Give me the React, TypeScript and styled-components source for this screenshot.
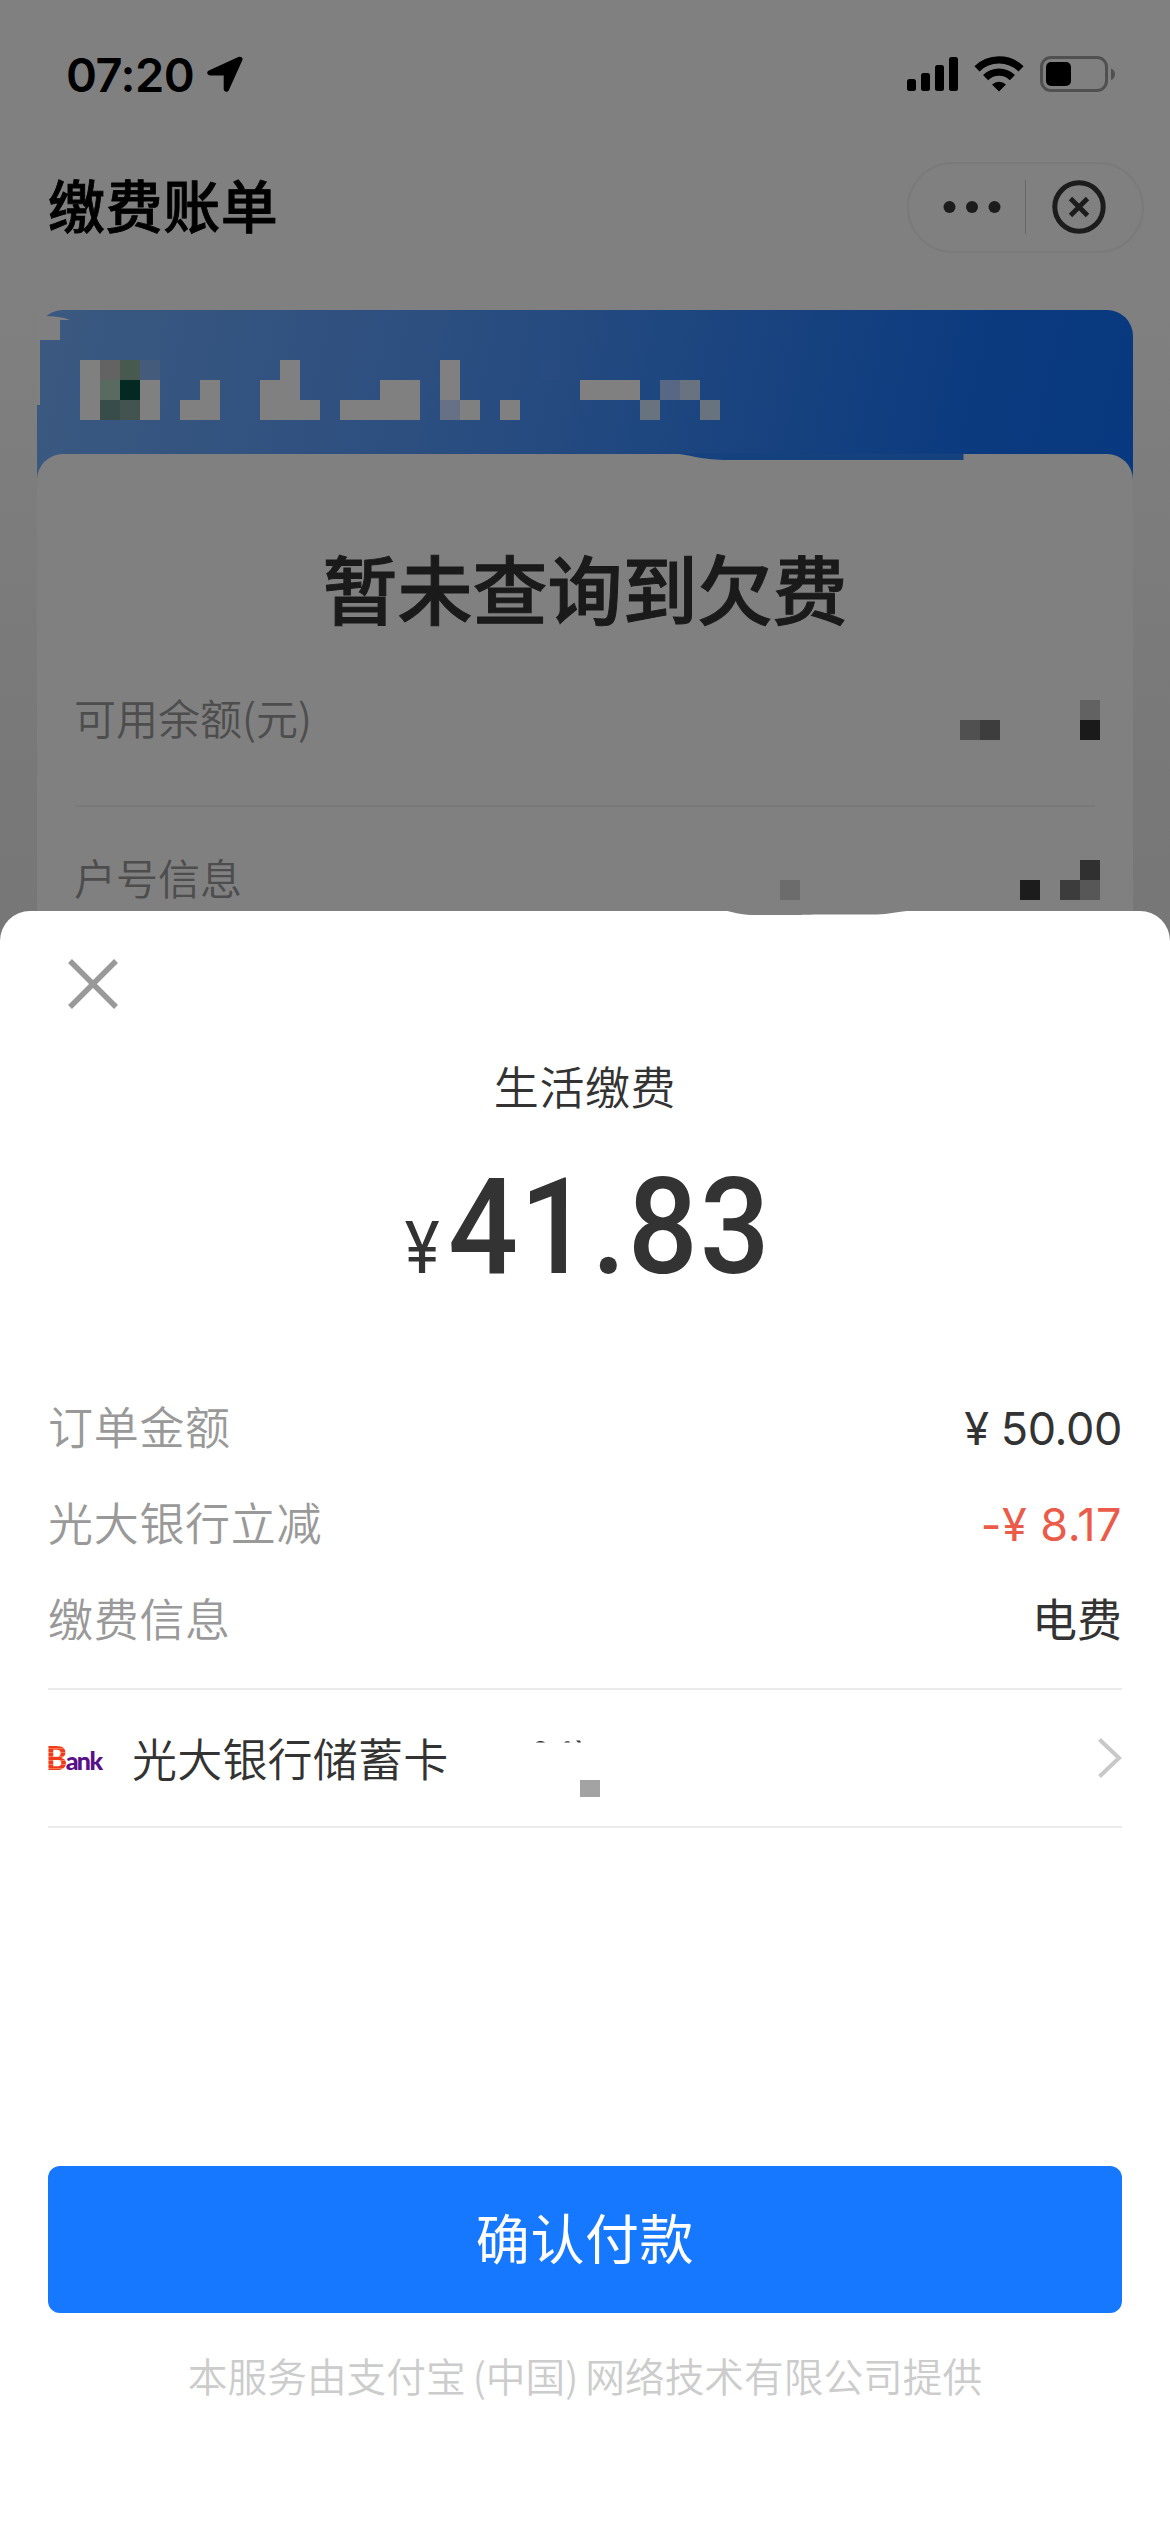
import React from "react";
import styled, { createGlobalStyle } from "styled-components";

const GlobalStyle = createGlobalStyle`
  * { box-sizing: border-box; }
  body { margin: 0; background: #fff; }
`;

const latin = `Inter, "Liberation Sans", "Noto Sans CJK SC", sans-serif`;
const cjk = `"Noto Sans CJK SC", Inter, sans-serif`;

const Screen = styled.div`
  width: 1170px;
  height: 2532px;
  display: flex;
  flex-direction: column;
  overflow: hidden;
  background: #fff;
  font-family: ${cjk};
`;

const Page = styled.div`
  flex: none;
  height: 951px;
  display: flex;
  flex-direction: column;
  overflow: hidden;
  background: linear-gradient(#808080 0, #808080 300px, #787878 780px, #777 100%);
`;

const StatusBar = styled.header`
  flex: none;
  height: 150px;
  padding: 0 54px 2px 66px;
  display: flex;
  align-items: center;
  justify-content: space-between;
`;

const Clock = styled.div`
  display: flex;
  align-items: center;
  gap: 13px;
  font: 570 47px/1 ${latin};
  letter-spacing: -0.5px;
  color: #000;
`;

const StatusIcons = styled.div`
  display: flex;
  align-items: center;
  gap: 16px;
`;

const TitleBar = styled.div`
  flex: none;
  height: 114px;
  padding: 0 26px 0 48px;
  display: flex;
  align-items: center;
  justify-content: space-between;
`;

const PageTitle = styled.h1`
  margin: 0;
  padding-bottom: 8px;
  font: 500 57px/80px ${cjk};
  letter-spacing: 0.6px;
  -webkit-text-stroke: 0.8px #000;
  color: #000;
`;

const Capsule = styled.div`
  width: 237px;
  height: 91px;
  border: 2px solid #7a7a7a;
  border-radius: 46px;
  display: flex;
  align-items: center;
  padding-left: 34px;
`;

const CapsuleDivider = styled.span`
  width: 1px;
  height: 54px;
  margin: 0 26px 0 24px;
  background: #676767;
`;

const BillCard = styled.section`
  position: relative;
  flex: none;
  width: 1096px;
  height: 700px;
  margin: 46px 0 0 37px;
  border-radius: 26px 26px 0 0;
  display: flex;
  flex-direction: column;
  padding-top: 144px;
  background: linear-gradient(103deg, #3b5980 0, #2d4f80 380px, #1a447f 700px, #0b3a7f 940px, #08387f 100%) no-repeat 0 0 / 100% 200px;
`;

const BannerMosaic = styled.svg`
  position: absolute;
  left: 0;
  top: 0;
`;

const BillBody = styled.div`
  flex: 1;
  border-radius: 26px 26px 0 0;
  background: #808080;
  display: flex;
  flex-direction: column;
  padding: 81px 38px 0 38px;
`;

const BillTitle = styled.h2`
  margin: 0 0 3px;
  text-align: center;
  font: 500 75px/104px ${cjk};
  -webkit-text-stroke: 1px #1a1a1a;
  color: #1a1a1a;
`;

const BillRow = styled.div<{ $last?: boolean }>`
  flex: none;
  height: ${(p) => (p.$last ? 120 : 165)}px;
  padding-top: ${(p) => (p.$last ? 40 : 45)}px;
  border-bottom: ${(p) => (p.$last ? 0 : 2)}px solid #797979;
  display: flex;
  align-items: flex-start;
  justify-content: space-between;
  font: 350 42px/60px ${cjk};
  text-indent: -1px;
  color: #4d4d4d;
`;

const RowMosaic = styled.svg`
  flex: none;
  margin: 13px -5px 0 0;
`;

const Sheet = styled.main`
  position: relative;
  flex: 1;
  margin-top: -40px;
  border-radius: 30px 30px 0 0;
  background: #fff;
  padding: 0 48px;
  display: flex;
  flex-direction: column;
`;

const EdgeSmudge = styled.svg`
  position: absolute;
  left: 727px;
  top: 0;
`;

const CloseButton = styled.button`
  width: 52px;
  height: 52px;
  margin: 47px 0 0 19px;
  padding: 0;
  border: 0;
  background: none;
  display: flex;
`;

const Merchant = styled.div`
  margin-top: 44px;
  text-align: center;
  font: 350 45px/64px ${cjk};
  letter-spacing: 0.6px;
  color: #333;
`;

const Amount = styled.div`
  margin-top: 41px;
  height: 138px;
  padding-left: 7px;
  display: flex;
  align-items: baseline;
  justify-content: center;
  font: 500 134px/138px Roboto, sans-serif;
  letter-spacing: 2px;
  transform: scaleX(0.92);
  color: #333;
`;

const Currency = styled.span`
  font-size: 72px;
  font-weight: 450;
  letter-spacing: 0;
  margin-right: 9px;
`;

const Details = styled.dl`
  margin: 84px 0 0;
  height: 309px;
  border-bottom: 2px solid #ebebeb;
`;

const DetailRow = styled.div`
  height: 96px;
  display: flex;
  align-items: center;
  justify-content: space-between;
`;

const DetailLabel = styled.dt`
  font: 350 45px/64px ${latin};
  letter-spacing: 0.7px;
  color: #999;
`;

const DetailValue = styled.dd<{ $tone?: string; $tracking?: number }>`
  margin: 0;
  font: 375 45px/64px ${latin};
  letter-spacing: ${(p) => p.$tracking || 0}px;
  color: ${(p) => p.$tone || "#333"};
`;

const PayMethod = styled.div`
  position: relative;
  height: 138px;
  border-bottom: 2px solid #ebebeb;
  display: flex;
  align-items: center;
`;

const BankLogo = styled.div`
  width: 53px;
  margin-right: 31px;
  padding-top: 2px;
  display: flex;
  align-items: baseline;
  font: 900 25px/26px Lato, sans-serif;
  letter-spacing: -1.6px;
  color: #5a1088;
`;

const LogoInitial = styled.span`
  width: 21px;
  margin-left: -3px;
  padding-left: 1px;
  font-size: 32px;
  background: repeating-linear-gradient(#f03a1c 0 3px, #fb7a50 3px 4px);
  background-clip: text;
  -webkit-background-clip: text;
  color: transparent;
`;

const BankName = styled.span`
  flex: 1;
  padding-bottom: 1px;
  font: 350 45px/64px ${cjk};
  letter-spacing: 0.2px;
  color: #333;
`;

const CardMosaic = styled.svg`
  position: absolute;
  left: 486px;
  top: 50px;
`;

const PayButton = styled.button`
  flex: none;
  height: 147px;
  margin-top: 338px;
  padding: 0 0 5px;
  border: 0;
  border-radius: 12px;
  background: #1677ff;
  color: #fff;
  font: 400 54px/80px ${cjk};
  letter-spacing: 0.6px;
`;

const Footnote = styled.p`
  margin: 33px 0 0;
  text-align: center;
  font: 350 39.7px/58px ${cjk};
  color: #ccc;
  white-space: nowrap;
`;

const OpenParen = styled.span`
  padding-left: 7px;
`;

const CloseParen = styled.span`
  padding-right: 7px;
`;

type Cell = [x: number, y: number, fill: string, w?: number, h?: number];

const G = "#808080";

const bannerCells: Cell[] = [
  [80, 360, G, 20, 60],
  [100, 360, "#636363"], [120, 360, "#48594f"], [140, 360, "#455b7b"],
  [100, 380, "#596a61"], [120, 380, "#042822"],
  [100, 400, "#384d49"], [120, 400, "#435450"],
  [140, 380, G, 20, 40],
  [180, 400, G], [200, 380, G, 20, 40],
  [260, 380, G, 20, 40], [280, 360, G, 20, 60], [300, 400, G],
  [340, 400, G, 40, 20], [380, 380, G, 40, 40],
  [440, 360, G, 20, 40], [440, 400, "#667186"], [460, 400, G],
  [500, 400, G], [540, 360, "#284b82"],
  [580, 380, G, 60, 20],
  [640, 400, "#68737f"], [660, 380, "#586783"], [680, 380, "#68737f"], [700, 400, "#68737f"],
];

const balanceCells: Cell[] = [
  [960, 720, "#505050"], [980, 720, "#3d3d3d"],
  [1080, 700, "#626262"], [1080, 720, "#1a1a1a"],
];

const accountCells: Cell[] = [
  [780, 880, "#6c6c6c"], [1020, 880, "#1c1c1c"], [1060, 880, "#3c3c3c"],
  [1080, 860, "#303030"], [1080, 880, "#575757"],
];

const Cells = ({ cells }: { cells: Cell[] }) => (
  <g shapeRendering="crispEdges">
    {cells.map(([x, y, fill, w = 20, h = 20]) => (
      <rect key={`${x}-${y}`} x={x} y={y} width={w} height={h} fill={fill} />
    ))}
  </g>
);

const LocationArrow = () => (
  <svg width="36" height="36" viewBox="0 0 36 36">
    <path d="M34.6 1.2C35.8 1.9 35.7 3.3 35.2 4.6L21.8 34.2C20.6 36.6 16.9 36.2 16.7 33.3V19.4H3C-.1 19.3-.8 15.7 1.9 14.4L31.3 1C32.6.4 33.8.6 34.6 1.2Z" fill="#000" />
  </svg>
);

const SignalIcon = () => (
  <svg width="51" height="36" viewBox="0 0 51 36">
    <rect x="0" y="23" width="9" height="12" rx="2.5" />
    <rect x="14" y="17" width="9" height="18" rx="2.5" />
    <rect x="28" y="9" width="9" height="26" rx="2.5" />
    <rect x="42" y="1" width="9" height="34" rx="2.5" />
  </svg>
);

const WifiIcon = () => (
  <svg width="50" height="36" viewBox="0 0 50 36">
    <g fill="none" stroke="#000" strokeWidth="7.400">
      <path d="M3 12.8A31.5 31.5 0 0 1 47 12.8" />
      <path d="M11.6 21.6A19.2 19.2 0 0 1 38.4 21.6" />
    </g>
    <path d="M25 35.5L18 28.6A10 10 0 0 1 32 28.6Z" />
  </svg>
);

const BatteryIcon = () => (
  <svg width="76" height="36" viewBox="0 0 76 36">
    <rect x="1.5" y="1.5" width="65" height="33" rx="9.5" fill="none" stroke="#505050" strokeWidth="3" />
    <rect x="6" y="6" width="25" height="24" rx="5" />
    <path d="M71 12.4C76.3 14 76.3 22.400 71 24Z" fill="#505050" />
  </svg>
);

export default function App() {
  return (
    <Screen>
      <GlobalStyle />
      <Page>
        <StatusBar>
          <Clock>
            07:20
            <LocationArrow />
          </Clock>
          <StatusIcons>
            <SignalIcon />
            <WifiIcon />
            <BatteryIcon />
          </StatusIcons>
        </StatusBar>

        <TitleBar>
          <PageTitle>缴费账单</PageTitle>
          <Capsule>
            <svg width="58" height="14" viewBox="0 0 58 14" fill="#1c1c1c">
              <circle cx="6.500" cy="7" r="6" />
              <circle cx="29" cy="7" r="6" />
              <circle cx="51.500" cy="7" r="6" />
            </svg>
            <CapsuleDivider />
            <svg width="54" height="54" viewBox="0 0 54 54" fill="none" stroke="#1c1c1c">
              <circle cx="27" cy="27" r="24.200" strokeWidth="5" />
              <path d="M18.500 18.500L35.500 35.500M35.500 18.500L18.500 35.500" strokeWidth="4.800" />
            </svg>
          </Capsule>
        </TitleBar>

        <BillCard>
          <BillBody>
            <BillTitle>暂未查询到欠费</BillTitle>
            <BillRow>
              可用余额(元)
              <RowMosaic width="140" height="40" viewBox="960 700 140 40">
                <Cells cells={balanceCells} />
              </RowMosaic>
            </BillRow>
            <BillRow $last>
              户号信息
              <RowMosaic width="320" height="40" viewBox="780 860 320 40">
                <Cells cells={accountCells} />
              </RowMosaic>
            </BillRow>
          </BillBody>
          <BannerMosaic width="1096" height="170" viewBox="37 310 1096 170">
            <path d="M37 310H56C51 311 47 314 45 316C54 316 63 317 70 320H60V340H40V405H37Z" fill={G} />
            <path d="M676 453.500C694 456 704 460 728 460H963.500V453.500Z" fill="#15417f" />
            <Cells cells={bannerCells} />
          </BannerMosaic>
        </BillCard>
      </Page>

      <Sheet>
        <EdgeSmudge width="180" height="5" viewBox="0 0 180 5">
          <path d="M0 0C10 2 14 4 30 4H72C74 3 140 3.500 150 3.500C162 3 168 1 180 0Z" fill="#808080" />
        </EdgeSmudge>
        <CloseButton aria-label="关闭">
          <svg width="52" height="52" viewBox="0 0 52 52">
            <path d="M3 3L49 49M49 3L3 49" stroke="#999" strokeWidth="5.500" />
          </svg>
        </CloseButton>
        <Merchant>生活缴费</Merchant>
        <Amount>
          <Currency>¥</Currency>41.83
        </Amount>

        <Details>
          <DetailRow>
            <DetailLabel>订单金额</DetailLabel>
            <DetailValue $tracking={-0.4}>¥ 50.00</DetailValue>
          </DetailRow>
          <DetailRow>
            <DetailLabel>光大银行立减</DetailLabel>
            <DetailValue $tone="#eb5b49" $tracking={0.5}>-¥ 8.17</DetailValue>
          </DetailRow>
          <DetailRow>
            <DetailLabel>缴费信息</DetailLabel>
            <DetailValue>电费</DetailValue>
          </DetailRow>
        </Details>

        <PayMethod>
          <BankLogo>
            <LogoInitial>B</LogoInitial>ank
          </BankLogo>
          <BankName>光大银行储蓄卡</BankName>
          <svg width="24" height="40" viewBox="0 0 24 40">
            <path d="M1.500 1.500L21 20L1.500 38.500" fill="none" stroke="#c8c8c8" strokeWidth="4" />
          </svg>
          <CardMosaic width="66" height="58" viewBox="534 1740 66 58">
            <path d="M536 1742.500C538 1740.500 543 1740.500 545 1742.500ZM564 1742.500L566 1741.200H569L570 1742.500ZM576 1740.500H580L581 1742.500H578Z" fill="#333" />
            <rect x="580" y="1780" width="20" height="17" fill="#a3a3a3" />
          </CardMosaic>
        </PayMethod>

        <PayButton>确认付款</PayButton>
        <Footnote>
          本服务由支付宝<OpenParen>(</OpenParen>中国<CloseParen>)</CloseParen>网络技术有限公司提供
        </Footnote>
      </Sheet>
    </Screen>
  );
}
